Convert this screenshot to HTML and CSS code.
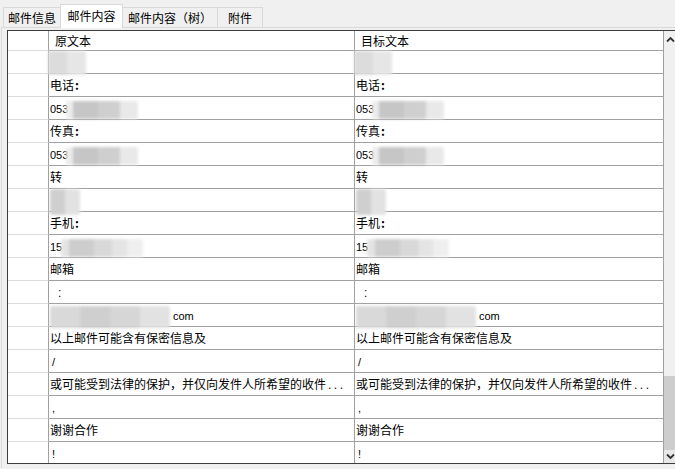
FILE: index.html
```html
<!DOCTYPE html>
<html lang="zh-CN">
<head>
<meta charset="utf-8">
<title>邮件内容</title>
<link rel="stylesheet" href="styles.css">
</head>
<body>
<div class="tabs">
  <div class="tab t1">邮件信息</div>
  <div class="tab t2 active">邮件内容</div>
  <div class="tab t3">邮件内容（树）</div>
  <div class="tab t4 last">附件</div>
</div>
<div class="panel">
  <div class="grid">
    <div class="rows">
      <div class="row head"><div class="rh"></div><div class="c1 hd">原文本</div><div class="c2 hd">目标文本</div></div>
      <div class="row"><div class="rh"></div><div class="c1"><span class="blur b-first"></span></div><div class="c2"><span class="blur b-first"></span></div></div>
      <div class="row"><div class="rh"></div><div class="c1">电话<span class="cl">:</span></div><div class="c2">电话<span class="cl">:</span></div></div>
      <div class="row"><div class="rh"></div><div class="c1"><span class="num">053</span><span class="blur b-num"></span></div><div class="c2"><span class="num">053</span><span class="blur b-num"></span></div></div>
      <div class="row"><div class="rh"></div><div class="c1">传真<span class="cl">:</span></div><div class="c2">传真<span class="cl">:</span></div></div>
      <div class="row"><div class="rh"></div><div class="c1"><span class="num">053</span><span class="blur b-num"></span></div><div class="c2"><span class="num">053</span><span class="blur b-num"></span></div></div>
      <div class="row"><div class="rh"></div><div class="c1">转</div><div class="c2">转</div></div>
      <div class="row"><div class="rh"></div><div class="c1"><span class="blur b-ext"></span></div><div class="c2"><span class="blur b-ext"></span></div></div>
      <div class="row"><div class="rh"></div><div class="c1">手机<span class="cl">:</span></div><div class="c2">手机<span class="cl">:</span></div></div>
      <div class="row"><div class="rh"></div><div class="c1"><span class="num">15</span><span class="blur b-mob"></span></div><div class="c2"><span class="num">15</span><span class="blur b-mob"></span></div></div>
      <div class="row"><div class="rh"></div><div class="c1">邮箱</div><div class="c2">邮箱</div></div>
      <div class="row"><div class="rh"></div><div class="c1"><span class="colon">:</span></div><div class="c2"><span class="colon">:</span></div></div>
      <div class="row"><div class="rh"></div><div class="c1"><span class="blur b-mail"></span><span class="num com">com</span></div><div class="c2"><span class="blur b-mail"></span><span class="num com">com</span></div></div>
      <div class="row"><div class="rh"></div><div class="c1">以上邮件可能含有保密信息及</div><div class="c2">以上邮件可能含有保密信息及</div></div>
      <div class="row"><div class="rh"></div><div class="c1"><span class="num sl">/</span></div><div class="c2"><span class="num sl">/</span></div></div>
      <div class="row"><div class="rh"></div><div class="c1">或可能受到法律的保护，并仅向发件人所希望的收件<span class="dots">...</span></div><div class="c2">或可能受到法律的保护，并仅向发件人所希望的收件<span class="dots">...</span></div></div>
      <div class="row"><div class="rh"></div><div class="c1"><span class="num sl">,</span></div><div class="c2"><span class="num sl">,</span></div></div>
      <div class="row"><div class="rh"></div><div class="c1">谢谢合作</div><div class="c2">谢谢合作</div></div>
      <div class="row"><div class="rh"></div><div class="c1"><span class="num sl">!</span></div><div class="c2"><span class="num sl">!</span></div></div>
    </div>
    <div class="sb">
      <div class="arrow up"><svg class="chev" width="9" height="7" viewBox="0 0 9 7"><path d="M1 5.5 L4.5 2 L8 5.5" fill="none" stroke="#333333" stroke-width="1.8"/></svg></div>
      <div class="track"><div class="thumb"></div></div>
      <div class="arrow down"><svg class="chev" width="9" height="7" viewBox="0 0 9 7"><path d="M1 1.5 L4.5 5 L8 1.5" fill="none" stroke="#333333" stroke-width="1.8"/></svg></div>
    </div>
  </div>
</div>
</body>
</html>
```
FILE: styles.css
```css
html, body {
  margin: 0;
  padding: 0;
}
body {
  width: 675px;
  height: 469px;
  overflow: hidden;
  background: #f0f0f0;
  font-family: "Noto Sans CJK SC", "Noto Sans", sans-serif;
  font-size: 12px;
  color: #000;
}
.tabs {
  display: flex;
  align-items: flex-end;
  height: 27px;
  padding-left: 3px;
  box-sizing: border-box;
}
.tab {
  height: 20px;
  line-height: 19px;
  text-align: center;
  border: 1px solid #d9d9d9;
  border-bottom: none;
  border-right: none;
  box-sizing: border-box;
  background: #f0f0f0;
  white-space: nowrap;
}
.t1 { width: 57px; }
.t2 { width: 63px; }
.t3 { width: 94px; }
.t4 { width: 46px; }
.tab.last {
  border-right: 1px solid #d9d9d9;
}
.tab.active {
  height: 24px;
  line-height: 21px;
  background: #fff;
  border-right: 1px solid #d9d9d9;
  margin-bottom: -1px;
}
.tab.active + .tab {
  border-left: none;
}
.panel {
  margin-left: 1px;
  border-top: 1px solid #d9d9d9;
  border-left: 1px solid #d9d9d9;
  padding: 2px 0 0 5px;
  height: 441px;
  box-sizing: border-box;
}
.grid {
  display: grid;
  grid-template-columns: 656px 12px;
  height: 434px;
  width: 669px;
  border: 1px solid #3c3c3c;
  border-right: none;
  box-sizing: border-box;
  background: #fff;
  overflow: hidden;
}
.rows {
  height: 432px;
  overflow: hidden;
}
.row {
  display: flex;
  height: 23px;
}
.row.head {
  height: 20px;
}
.rh, .c1, .c2 {
  box-sizing: border-box;
  height: 100%;
  white-space: nowrap;
  overflow: hidden;
  line-height: 22px;
}
.rh {
  width: 41px;
  border-bottom: 1px solid #dcdcdc;
  border-right: 1px solid #a0a0a0;
}
.c1, .c2 {
  border-bottom: 1px solid #a0a0a0;
  border-right: 1px solid #a0a0a0;
  padding-left: 1px;
  overflow: visible;
}
.c1 { width: 306px; }
.c2 { width: 309px; }
.hd {
  padding-left: 6px;
  line-height: 19px;
}
.cl {
  font-weight: bold;
  margin-left: 1px;
}
.num {
  font-family: "Liberation Sans", "DejaVu Sans", sans-serif;
  font-size: 11px;
}
.sl {
  margin-left: 2px;
}
.com {
  margin-left: 3px;
}
.colon {
  font-family: "Liberation Sans", sans-serif;
  margin-left: 8px;
}
.dots {
  font-family: "Liberation Sans", sans-serif;
  letter-spacing: 2.5px;
  margin-left: 2px;
}
.blur {
  display: inline-block;
  vertical-align: middle;
  height: 18px;
  filter: blur(1.5px);
  border-radius: 2px;
}
.b-first {
  width: 38px;
  height: 24px;
  margin-left: -2px;
  margin-top: -2px;
  background: linear-gradient(90deg, #dcdcdc 0 50%, #e6e6e6 50% 100%);
}
.b-num {
  width: 72px;
  margin-left: -2px;
  background: linear-gradient(90deg, #ececec 0 10%, #c6c6c6 10% 45%, #cfcfcf 45% 75%, #e9e9e9 75% 100%);
}
.b-ext {
  width: 30px;
  height: 26px;
  background: linear-gradient(90deg, #cfcfcf 0 50%, #e2e2e2 50% 100%);
}
.b-mob {
  width: 82px;
  margin-left: -1px;
  background: linear-gradient(90deg, #e4e4e4 0 10%, #cdcdcd 10% 40%, #d8d8d8 40% 62%, #e4e4e4 62% 80%, #efefef 80% 100%);
}
.b-mail {
  width: 120px;
  height: 22px;
  background: linear-gradient(90deg, #d9d9d9 0 25%, #cfcfcf 25% 50%, #d6d6d6 50% 75%, #e2e2e2 75% 100%);
}
.sb {
  display: grid;
  grid-template-rows: 17px 1fr 13px;
  height: 432px;
  background: #f0f0f0;
}
.arrow {
  display: flex;
  align-items: center;
  justify-content: center;
}
.chev {
  display: block;
}
.down {
  background: #e8e8e8;
}
.track {
  display: flex;
  flex-direction: column;
  justify-content: flex-end;
}
.thumb {
  height: 74px;
  background: #cdcdcd;
}
```
